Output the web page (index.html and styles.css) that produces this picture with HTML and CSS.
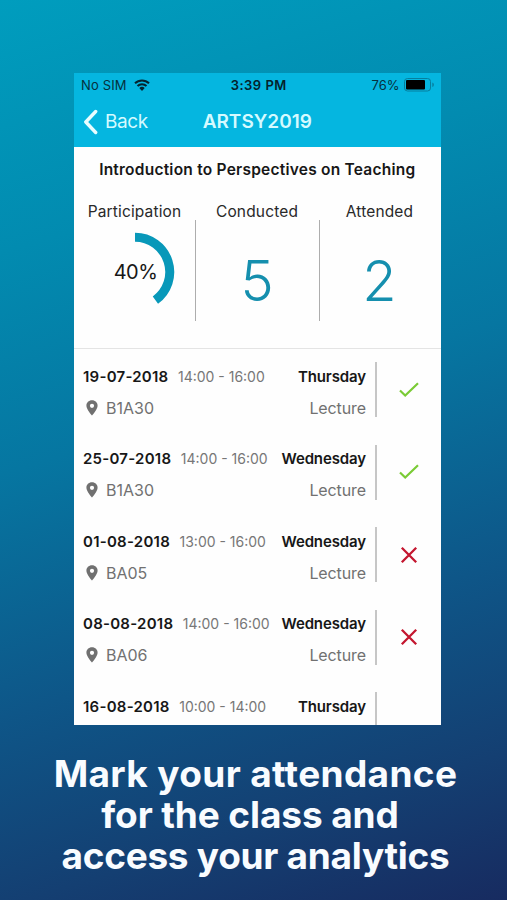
FILE: index.html
```
<!DOCTYPE html>
<html lang="en">
<head>
    <meta charset="UTF-8">
    <meta name="viewport" content="width=device-width, initial-scale=1.0">
    <title>Attendance</title>
    <link rel="stylesheet" href="styles.css">
</head>
<body>
    <main class="phone">
        <header>
            <div class="status-bar">
                <div class="carrier">
                    <span>No SIM</span>
                    <svg class="wifi" viewBox="0 0 16 12">
                        <path d="M1 4.3a10 10 0 0 1 14 0M3.5 7a6.4 6.4 0 0 1 9 0" fill="none" stroke="#06242e" stroke-width="2"/>
                        <path d="M8 12L5.3 9.1a3.9 3.9 0 0 1 5.4 0z" fill="#06242e"/>
                    </svg>
                </div>
                <span class="time">3:39 PM</span>
                <div class="battery">
                    <span>76%</span>
                    <svg viewBox="0 0 31 14">
                        <rect x=".5" y=".5" width="26" height="12.5" rx="3" fill="none" stroke="#067f9e"/>
                        <rect x="2" y="2" width="19" height="9.5" rx="1" fill="#000"/>
                        <path d="M28.3 4.5q1.6 .6 1.6 2.3t-1.6 2.3z" fill="#067f9e"/>
                    </svg>
                </div>
            </div>
            <nav class="nav-bar">
                <a class="back">
                    <svg viewBox="0 0 15 26"><path d="M12.7 2.5L2.8 13l9.9 10.5" fill="none" stroke="#e9fdff" stroke-width="3.4" stroke-linecap="round" stroke-linejoin="round"/></svg>
                    <span>Back</span>
                </a>
                <h1>ARTSY2019</h1>
            </nav>
        </header>

        <section class="summary">
            <h2>Introduction to Perspectives on Teaching</h2>
            <div class="stats">
                <div class="stat">
                    <p class="stat-label">Participation</p>
                    <svg class="ring" viewBox="0 0 80 80">
                        <path d="M40 5.3A34.7 34.7 0 0 1 60.4 68.1" fill="none" stroke="#0898b9" stroke-width="9"/>
                        <text x="40.5" y="47" text-anchor="middle">40%</text>
                    </svg>
                </div>
                <div class="stat">
                    <p class="stat-label">Conducted</p>
                    <p class="stat-value">5</p>
                </div>
                <div class="stat">
                    <p class="stat-label">Attended</p>
                    <p class="stat-value">2</p>
                </div>
            </div>
        </section>

        <section class="classes" id="classes"></section>
    </main>

    <p class="caption">
        <span class="line-one">Mark your attendance</span>
        <span class="line-two">for the class and</span>
        <span class="line-three">access your analytics</span>
    </p>

    <script>
        const classes = [
            { date: "19-07-2018", time: "14:00 - 16:00", day: "Thursday", room: "B1A30", status: "present" },
            { date: "25-07-2018", time: "14:00 - 16:00", day: "Wednesday", room: "B1A30", status: "present" },
            { date: "01-08-2018", time: "13:00 - 16:00", day: "Wednesday", room: "BA05", status: "absent" },
            { date: "08-08-2018", time: "14:00 - 16:00", day: "Wednesday", room: "BA06", status: "absent" },
            { date: "16-08-2018", time: "10:00 - 14:00", day: "Thursday" }
        ];

        const pin = '<svg class="pin" viewBox="0 0 12 16"><path fill-rule="evenodd" d="M6 .3C2.7.3.4 2.7.4 5.8.4 9.6 6 15.5 6 15.5s5.6-5.9 5.6-9.7C11.6 2.7 9.3.3 6 .3zM6 3.7a2.1 2.1 0 1 1 0 4.2 2.1 2.1 0 0 1 0-4.2z" fill="#707070"/></svg>';
        const marks = {
            present: '<svg class="mark" viewBox="0 0 22 18"><path d="M2 9.5l5.2 5L20 2.2" fill="none" stroke="#7acb35" stroke-width="2.2"/></svg>',
            absent: '<svg class="mark" viewBox="0 0 22 18"><path d="M3.8 1.8l14.4 14.4M18.2 1.8L3.8 16.2" fill="none" stroke="#c4162f" stroke-width="2.3"/></svg>'
        };

        document.getElementById("classes").innerHTML = classes.map(function (item) {
            const place = item.room ? `
                        <div class="line">
                            ${pin}
                            <span class="room">${item.room}</span>
                            <span class="type">Lecture</span>
                        </div>` : "";

            return `
                <article class="class-row">
                    <div class="details">
                        <div class="line">
                            <span class="date">${item.date}</span>
                            <span class="hours">${item.time}</span>
                            <span class="day">${item.day}</span>
                        </div>${place}
                    </div>
                    <div class="result">${marks[item.status] || ""}</div>
                </article>`;
        }).join("");
    </script>
</body>
</html>
```
FILE: styles.css
```
* {
    box-sizing: border-box;
}

body {
    font-family: Inter, "Liberation Sans", sans-serif;
    margin: 0;
    height: 900px;
    padding-top: 73px;
    overflow: hidden;
    background: linear-gradient(163deg, #009dbe 0%, #028bb0 24%, #0676a1 45%, #0e5688 68%, #143f72 86%, #172b60 100%);
}

h1, h2, p {
    margin: 0;
}

.phone {
    width: 366.5px;
    height: 651.5px;
    margin-left: 74px;
    background: #fefefe;
    overflow: hidden;
}

header {
    height: 74px;
    background: #05b6e0;
}

.status-bar {
    display: grid;
    grid-template-columns: 1fr auto 1fr;
    align-items: center;
    height: 24px;
    padding: 0 6px 0 7px;
    font-size: 13px;
    color: #06303d;
}

.carrier, .battery {
    display: flex;
    align-items: center;
}

.carrier span {
    letter-spacing: 0.15px;
}

.wifi {
    width: 16px;
    height: 12px;
    margin-left: 7px;
}

.time {
    margin-left: 2px;
    font-weight: 600;
    color: #04222c;
    letter-spacing: 0.5px;
}

.battery {
    justify-content: flex-end;
}

.battery svg {
    width: 31px;
    height: 14px;
    margin-left: 4px;
}

.nav-bar {
    display: grid;
    grid-template-columns: 1fr auto 1fr;
    align-items: center;
    height: 49px;
    padding: 0 9px;
    color: #d5faff;
}

.back {
    display: flex;
    align-items: center;
    font-size: 19px;
    letter-spacing: -0.4px;
}

.back svg {
    width: 15px;
    height: 26px;
    margin-right: 7px;
}

h1 {
    font-size: 19px;
    font-weight: 600;
}

.summary {
    height: 201.5px;
    padding-top: 13px;
    border-bottom: 1px solid #e4e4e4;
    color: #171717;
}

h2 {
    font-size: 15.5px;
    line-height: 20px;
    font-weight: 600;
    letter-spacing: 0.23px;
    text-align: center;
}

.stats {
    display: grid;
    grid-template-columns: 121px 124px 121px;
    height: 120px;
    margin-top: 22px;
}

.stat {
    position: relative;
    display: flex;
    flex-direction: column;
    align-items: center;
}

.stat + .stat::before {
    content: "";
    position: absolute;
    left: 0;
    top: 18px;
    width: 1px;
    height: 101px;
    background: #adadad;
}

.stat-label {
    font-size: 15.5px;
    line-height: 20px;
    letter-spacing: 0.15px;
    color: #292929;
}

.ring {
    width: 80px;
    height: 80px;
    margin-top: 10px;
}

.ring text {
    font-size: 20px;
    letter-spacing: -0.6px;
    fill: #171717;
}

.stat-value {
    margin-top: 24px;
    font-size: 56px;
    line-height: 70px;
    font-weight: 300;
    color: #158fae;
}

.class-row {
    display: flex;
    height: 82.6px;
    padding: 13.5px 0 14px 9px;
}

.details {
    width: 294px;
    padding-right: 9px;
    border-right: 2px solid #c6c6c6;
}

.line {
    display: flex;
    align-items: center;
    height: 28px;
}

.line + .line {
    height: 35px;
}

.date, .day {
    font-size: 15px;
    font-weight: 600;
    color: #171717;
}

.date {
    letter-spacing: 0.25px;
}

.hours {
    margin-left: 9.5px;
    font-size: 14px;
    color: #777;
}

.day, .type {
    margin-left: auto;
}

.day {
    letter-spacing: -0.12px;
}

.pin {
    width: 12px;
    height: 16px;
    margin-left: 3px;
}

.room, .type {
    font-size: 16px;
    color: #717171;
}

.room {
    margin-left: 8px;
}

.type {
    letter-spacing: -0.1px;
}

.result {
    flex: 1;
    display: flex;
    align-items: center;
    justify-content: center;
}

.mark {
    width: 22px;
    height: 18px;
}

.caption {
    display: flex;
    flex-direction: column;
    align-items: center;
    margin-top: 28px;
    padding-left: 4px;
    font-size: 37px;
    line-height: 41px;
    font-weight: 700;
    color: #f9fcff;
    white-space: nowrap;
}

.line-one {
    letter-spacing: 0.35px;
}

.line-two {
    margin-right: 11px;
    letter-spacing: -0.1px;
}

.line-three {
    letter-spacing: -0.27px;
}
```
